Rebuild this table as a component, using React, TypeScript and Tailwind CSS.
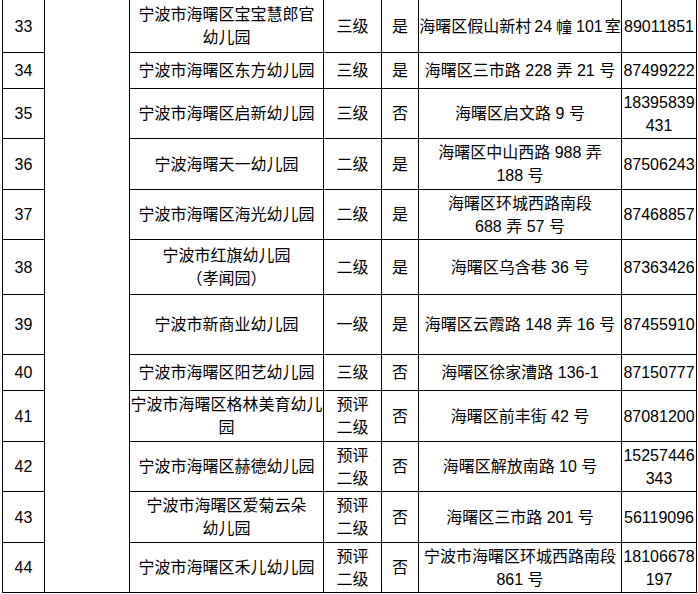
import React from "react";

type Row = {
  n: string;
  h: string;
  name: React.ReactNode;
  level: React.ReactNode;
  yes: string;
  addr: React.ReactNode;
  phone: React.ReactNode;
};

const cjk = { fontFamily: '"Noto Sans CJK SC", "Noto Sans CJK JP", sans-serif' };

const addr33 = (
  <span className="flex items-center">
    <span>海曙区假山新村</span>
    <span className="ml-[3px]">24</span>
    <span className="ml-[4px]" style={cjk}>{"\u5E62"}</span>
    <span className="ml-[4px]">101</span>
    <span className="ml-[2px]">室</span>
  </span>
);

const rows: Row[] = [
  { n: "33", h: "h-[53px]", name: <>宁波市海曙区宝宝慧郎官<br />幼儿园</>, level: "三级", yes: "是", addr: addr33, phone: "89011851" },
  { n: "34", h: "h-[36px]", name: "宁波市海曙区东方幼儿园", level: "三级", yes: "是", addr: "海曙区三市路 228 弄 21 号", phone: "87499222" },
  { n: "35", h: "h-[50px]", name: "宁波市海曙区启新幼儿园", level: "三级", yes: "否", addr: "海曙区启文路 9 号", phone: <>18395839<br />431</> },
  { n: "36", h: "h-[51px]", name: "宁波海曙天一幼儿园", level: "二级", yes: "是", addr: <>海曙区中山西路 988 弄<br />188 号</>, phone: "87506243" },
  { n: "37", h: "h-[50px]", name: "宁波市海曙区海光幼儿园", level: "二级", yes: "是", addr: <>海曙区环城西路南段<br />688 弄 57 号</>, phone: "87468857" },
  { n: "38", h: "h-[55px]", name: <>宁波市红旗幼儿园<br />（孝闻园）</>, level: "二级", yes: "是", addr: "海曙区乌含巷 36 号", phone: "87363426" },
  { n: "39", h: "h-[60px]", name: "宁波市新商业幼儿园", level: "一级", yes: "是", addr: "海曙区云霞路 148 弄 16 号", phone: "87455910" },
  { n: "40", h: "h-[36px]", name: "宁波市海曙区阳艺幼儿园", level: "三级", yes: "否", addr: "海曙区徐家漕路 136-1", phone: "87150777" },
  { n: "41", h: "h-[51px]", name: <>宁波市海曙区格林美育幼儿<br />园</>, level: <>预评<br />二级</>, yes: "否", addr: "海曙区前丰街 42 号", phone: "87081200" },
  { n: "42", h: "h-[50px]", name: "宁波市海曙区赫德幼儿园", level: <>预评<br />二级</>, yes: "否", addr: "海曙区解放南路 10 号", phone: <>15257446<br />343</> },
  { n: "43", h: "h-[51px]", name: <>宁波市海曙区爱菊云朵<br />幼儿园</>, level: <>预评<br />二级</>, yes: "否", addr: "海曙区三市路 201 号", phone: "56119096" },
  { n: "44", h: "h-[50px]", name: "宁波市海曙区禾儿幼儿园", level: <>预评<br />二级</>, yes: "否", addr: <>宁波市海曙区环城西路南段<br />861 号</>, phone: <>18106678<br />197</> },
];

const cell =
  "flex items-center justify-center text-center border-r border-b border-black whitespace-nowrap overflow-visible";

export default function App() {
  return (
    <div
      className="w-[698px] h-[594px] bg-white text-black text-[16px] leading-[23px] overflow-hidden"
      style={{ fontFamily: '"Liberation Sans", "Noto Sans CJK SC", sans-serif' }}
    >
      <div className="ml-[2px] flex border-l border-black w-[695px]">
        <div className="flex flex-col w-[42px]">
          {rows.map((r) => (
            <div key={r.n} className={`${cell} ${r.h}`}>{r.n}</div>
          ))}
        </div>
        <div className="w-[85px] border-r border-b border-black" />
        <div className="flex flex-col w-[194px]">
          {rows.map((r) => (
            <div key={r.n} className={`${cell} ${r.h}`}>{r.name}</div>
          ))}
        </div>
        <div className="flex flex-col w-[58px]">
          {rows.map((r) => (
            <div key={r.n} className={`${cell} ${r.h}`}>{r.level}</div>
          ))}
        </div>
        <div className="flex flex-col w-[37px]">
          {rows.map((r) => (
            <div key={r.n} className={`${cell} ${r.h}`}>{r.yes}</div>
          ))}
        </div>
        <div className="flex flex-col w-[203px]">
          {rows.map((r) => (
            <div key={r.n} className={`${cell} ${r.h}`}>{r.addr}</div>
          ))}
        </div>
        <div className="flex flex-col w-[75px]">
          {rows.map((r) => (
            <div key={r.n} className={`${cell} ${r.h}`}>{r.phone}</div>
          ))}
        </div>
      </div>
    </div>
  );
}
